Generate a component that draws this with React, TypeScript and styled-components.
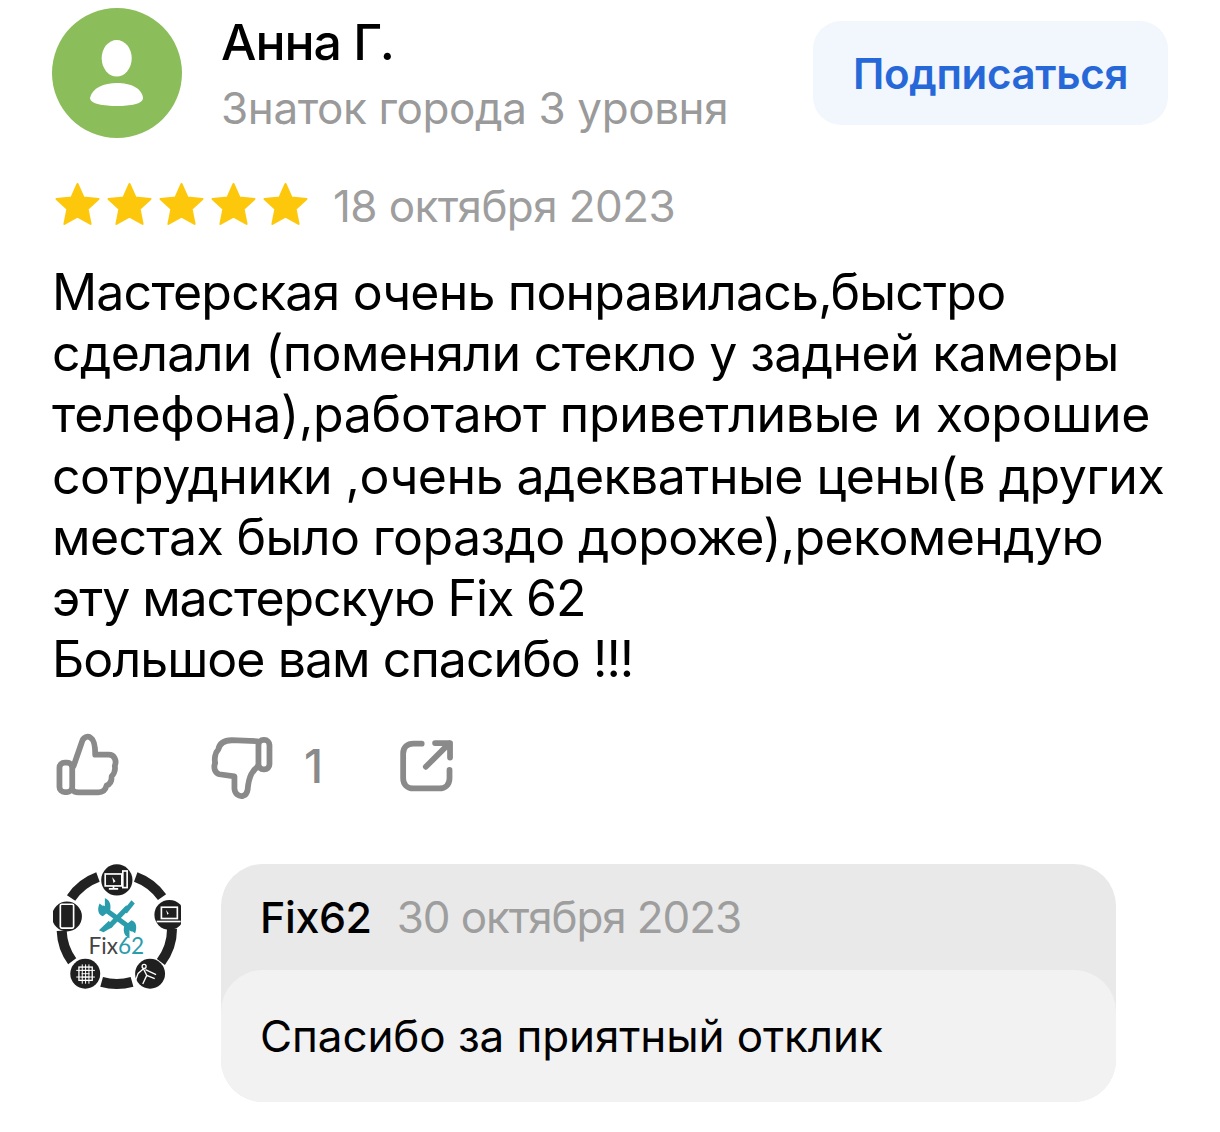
import React from 'react';
import styled, { createGlobalStyle } from 'styled-components';

const GlobalStyle = createGlobalStyle`
    html, body {
        margin: 0;
        padding: 0;
        background: #ffffff;
    }
    body {
        font-family: Inter, "Noto Sans", sans-serif;
        color: #000000;
    }
`;

const Page = styled.div`
    width: 1220px;
    height: 1132px;
    box-sizing: border-box;
    padding: 8px 52px 0;
    overflow: hidden;
`;

const Header = styled.div`
    display: flex;
    align-items: flex-start;
`;

const Avatar = styled.svg`
    display: block;
    width: 130px;
    height: 130px;
    flex-shrink: 0;
`;

const Author = styled.div`
    display: flex;
    flex-direction: column;
    flex: 1;
    margin-left: 39px;
`;

const AuthorName = styled.div`
    font-size: 50px;
    line-height: 68px;
    font-weight: 500;
    letter-spacing: -1px;
`;

const AuthorLevel = styled.div`
    margin-top: 4px;
    font-size: 44px;
    line-height: 56px;
    letter-spacing: -0.4px;
    color: #9a9a9a;
`;

const SubscribeButton = styled.button`
    width: 355px;
    height: 104px;
    margin-top: 13px;
    border: 0;
    border-radius: 28px;
    background: #f2f6fd;
    color: #2768d9;
    font-family: inherit;
    font-size: 42px;
    font-weight: 600;
    letter-spacing: -0.3px;
`;

const RatingRow = styled.div`
    display: flex;
    align-items: center;
    margin-top: 38px;
    height: 60px;
`;

const Stars = styled.div`
    display: flex;
    gap: 7px;
    margin: -4px 0 0 3px;
`;

const Star = styled.svg`
    display: block;
    width: 45px;
    height: 44px;
`;

const DateText = styled.span`
    font-size: 44px;
    letter-spacing: -0.6px;
    color: #9e9e9e;
    white-space: nowrap;
`;

const RatingDate = styled(DateText)`
    margin-left: 25px;
`;

const ReplyDate = styled(DateText)`
    letter-spacing: -1.1px;
`;

const ReviewText = styled.div`
    margin-top: 26px;
    font-size: 50px;
    line-height: 61.2px;
`;

const ReviewLine = styled.div<{ $tracking: number }>`
    white-space: nowrap;
    letter-spacing: ${p => p.$tracking}px;
`;

const Actions = styled.div`
    display: flex;
    align-items: center;
    margin-top: 43px;
    height: 66px;
    padding-left: 2px;
`;

const ActionIcon = styled.svg`
    display: block;
    width: 68px;
    height: 68px;
    flex-shrink: 0;
    fill: none;
    stroke: #8a8a8a;
    stroke-width: 5.6;
    stroke-linecap: round;
    stroke-linejoin: round;
`;

const DislikeIcon = styled(ActionIcon)`
    margin-left: 87px;
`;

const ShareIcon = styled(ActionIcon)`
    margin-left: 64px;
    position: relative;
    top: 7px;
`;

const Count = styled.span`
    margin-left: 27px;
    width: 30px;
    font-size: 46px;
    font-weight: 500;
    color: #8a8a8a;
`;

const Reply = styled.div`
    display: flex;
    align-items: flex-start;
    margin-top: 65px;
`;

const Logo = styled.svg`
    display: block;
    width: 128px;
    height: 128px;
    flex-shrink: 0;
    margin-left: 1px;
`;

const Bubble = styled.div`
    width: 895px;
    margin-left: 40px;
    background: #e9e9e9;
    border-radius: 42px;
`;

const BubbleHead = styled.div`
    display: flex;
    align-items: center;
    height: 106px;
    padding-left: 39px;
`;

const ReplyAuthor = styled.span`
    font-size: 43px;
    font-weight: 500;
    letter-spacing: -0.4px;
    margin-right: 25px;
`;

const BubbleBody = styled.div`
    display: flex;
    align-items: center;
    height: 132px;
    padding-left: 39px;
    background: #f2f2f2;
    border-radius: 42px;
    font-size: 44px;
    letter-spacing: -0.1px;
`;

const stars = [0, 1, 2, 3, 4];

const reviewLines: [string, number][] = [
    ['Мастерская очень понравилась,быстро', -0.81],
    ['сделали (поменяли стекло у задней камеры', -0.64],
    ['телефона),работают приветливые и хорошие', -0.32],
    ['сотрудники ,очень адекватные цены(в других', -0.52],
    ['местах было гораздо дороже),рекомендую', -0.62],
    ['эту мастерскую Fix 62', -1.09],
    ['Большое вам спасибо !!!', -0.95],
];

// ring segments between the five round badges of the logo
const cx = 232;
const cy = 222;
const polar = (r: number, deg: number) => {
    const a = (deg * Math.PI) / 180;
    return `${cx + r * Math.cos(a)} ${cy + r * Math.sin(a)}`;
};
const arc = (r: number, from: number, to: number) =>
    `M${polar(r, from)} A${r} ${r} 0 0 1 ${polar(r, to)}`;
const ringArcs: [number, number][] = [
    [-70, -35],
    [0, 37],
    [74, 106],
    [144, 178],
    [214, 250],
];

const FixLogo = () => (
    <Logo viewBox="40 27 385 385">
        {ringArcs.map(([from, to]) => (
            <path key={from} d={arc(166, from, to)} fill="none" stroke="#222222" strokeWidth="30" />
        ))}
        <g fill="#1f1f1f">
            <circle cx="232" cy="75" r="47" />
            <circle cx="82" cy="185" r="45" />
            <circle cx="390" cy="180" r="45" />
            <circle cx="137" cy="357" r="45" />
            <circle cx="332" cy="357" r="45" />
        </g>
        {/* desktop */}
        <g fill="none" stroke="#ffffff" strokeWidth="5">
            <rect x="197" y="57" width="50" height="36" />
            <rect x="250" y="48" width="13" height="50" />
            <path d="M222 93 V100 M208 102 H236" />
        </g>
        <path d="M218 66 L222 84 L228 79 Z" fill="#ffffff" />
        {/* phone */}
        <rect x="62" y="148" width="40" height="72" rx="4" fill="none" stroke="#ffffff" strokeWidth="5" />
        {/* laptop */}
        <g fill="none" stroke="#ffffff" strokeWidth="5">
            <rect x="366" y="157" width="48" height="34" />
            <path d="M352 200 H424" />
        </g>
        <path d="M380 165 L384 180 L388 176 Z" fill="#ffffff" />
        {/* chip */}
        <g fill="none" stroke="#ffffff" strokeWidth="4">
            <rect x="118" y="337" width="40" height="40" />
            <path d="M126 347 H150 M126 357 H150 M126 367 H150 M128 329 V387 M138 329 V387 M148 329 V387 M110 347 H166 M110 367 H166" strokeWidth="3" />
        </g>
        {/* repair figure */}
        <g fill="none" stroke="#ffffff" strokeWidth="4">
            <circle cx="314" cy="335" r="6" />
            <path d="M312 342 L296 356 L288 378 M312 342 L322 362 L346 372 M322 362 L310 388 M318 345 L350 360" />
        </g>
        {/* crossed tools */}
        <g fill="none" stroke="#2b9cac" strokeLinecap="round">
            <path d="M192 160 L276 222" strokeWidth="15" />
            <path d="M212 212 L262 160" strokeWidth="15" />
        </g>
        <g fill="#2b9cac">
            <path d="M180 146 L196 158 L196 130 C208 134 216 146 212 166 L190 184 C176 180 172 164 180 146 Z" />
            <path d="M287 235 L270 224 L270 250 C256 244 250 232 254 214 L276 196 C290 200 294 216 287 235 Z" />
            <path d="M178 226 L208 198 L220 216 L192 232 Z" />
            <path d="M252 166 L276 136 L286 146 L262 176 Z" />
        </g>
        <text x="147" y="298" fontFamily="Lato, sans-serif" fontSize="68" fill="#444444">
            Fix<tspan fill="#2b9cac">62</tspan>
        </text>
    </Logo>
);

const App = () => (
    <Page>
        <GlobalStyle />
        <Header>
            <Avatar viewBox="0 0 130 130">
                <circle cx="65" cy="65" r="65" fill="#8bbd5a" />
                <ellipse cx="64.7" cy="50.3" rx="15" ry="18.3" fill="#ffffff" />
                <path
                    d="M38 90 C40 80 52 75 65 75 C78 75 90 80 91 90 C91 96 78 98 65 98 C52 98 38 96 38 90 Z"
                    fill="#ffffff"
                />
            </Avatar>
            <Author>
                <AuthorName>Анна Г.</AuthorName>
                <AuthorLevel>Знаток города 3 уровня</AuthorLevel>
            </Author>
            <SubscribeButton>Подписаться</SubscribeButton>
        </Header>
        <RatingRow>
            <Stars>
                {stars.map(i => (
                    <Star key={i} viewBox="0 0 45 44">
                        <path
                            d="M22.5 2 L28.5 15.5 L43.5 17 L32.6 27 L35.6 42 L22.5 34.6 L9.4 42 L12.4 27 L1.5 17 L16.5 15.5 Z"
                            fill="#fdc80c"
                            stroke="#fdc80c"
                            strokeWidth="2"
                            strokeLinejoin="round"
                        />
                    </Star>
                ))}
            </Stars>
            <RatingDate>18 октября 2023</RatingDate>
        </RatingRow>
        <ReviewText>
            {reviewLines.map(([line, tracking]) => (
                <ReviewLine key={line} $tracking={tracking}>
                    {line}
                </ReviewLine>
            ))}
        </ReviewText>
        <Actions>
            <ActionIcon viewBox="0 0 66 66">
                <rect x="5.3" y="29.7" width="12.4" height="28.6" rx="5" />
                <path d="M19 33 L27 10 C28 5 33 3 36 6 C39 8 40 14 40 22 L53 22 C59 22 61 28 59 33 C60 38 57 42 56 43 C56 48 54 51 51 52 C50 56 47 58.5 43 58.5 L24 58.5 C21 58.5 19 58 18 56" />
            </ActionIcon>
            <DislikeIcon viewBox="0 0 66 66">
                <rect x="48" y="7.7" width="10.7" height="28.6" rx="5" />
                <path d="M47 9 L22 8 C14 8 10 12 9 17 C6 20 5 26 6 30 C4 35 6 40 10 41 L24.7 43 L24.7 55 C25 60 29 63 33 62 C36 61 37 59 37.5 56 C38 50 39 45 41 41 C43 37 45 35 48 33" />
            </DislikeIcon>
            <Count>1</Count>
            <ShareIcon viewBox="0 0 66 66">
                <path d="M23 4.5 L15 4.5 C9 4.5 5 8 5 14 L5 38 C5 44 9 48 15 48 L40 48 C46 48 50 44 50 38 L50 30" />
                <path d="M27 27 L50 4 M36 4 L50.5 4 L50.5 18" />
            </ShareIcon>
        </Actions>
        <Reply>
            <FixLogo />
            <Bubble>
                <BubbleHead>
                    <ReplyAuthor>Fix62</ReplyAuthor>
                    <ReplyDate>30 октября 2023</ReplyDate>
                </BubbleHead>
                <BubbleBody>Спасибо за приятный отклик</BubbleBody>
            </Bubble>
        </Reply>
    </Page>
);

export default App;
